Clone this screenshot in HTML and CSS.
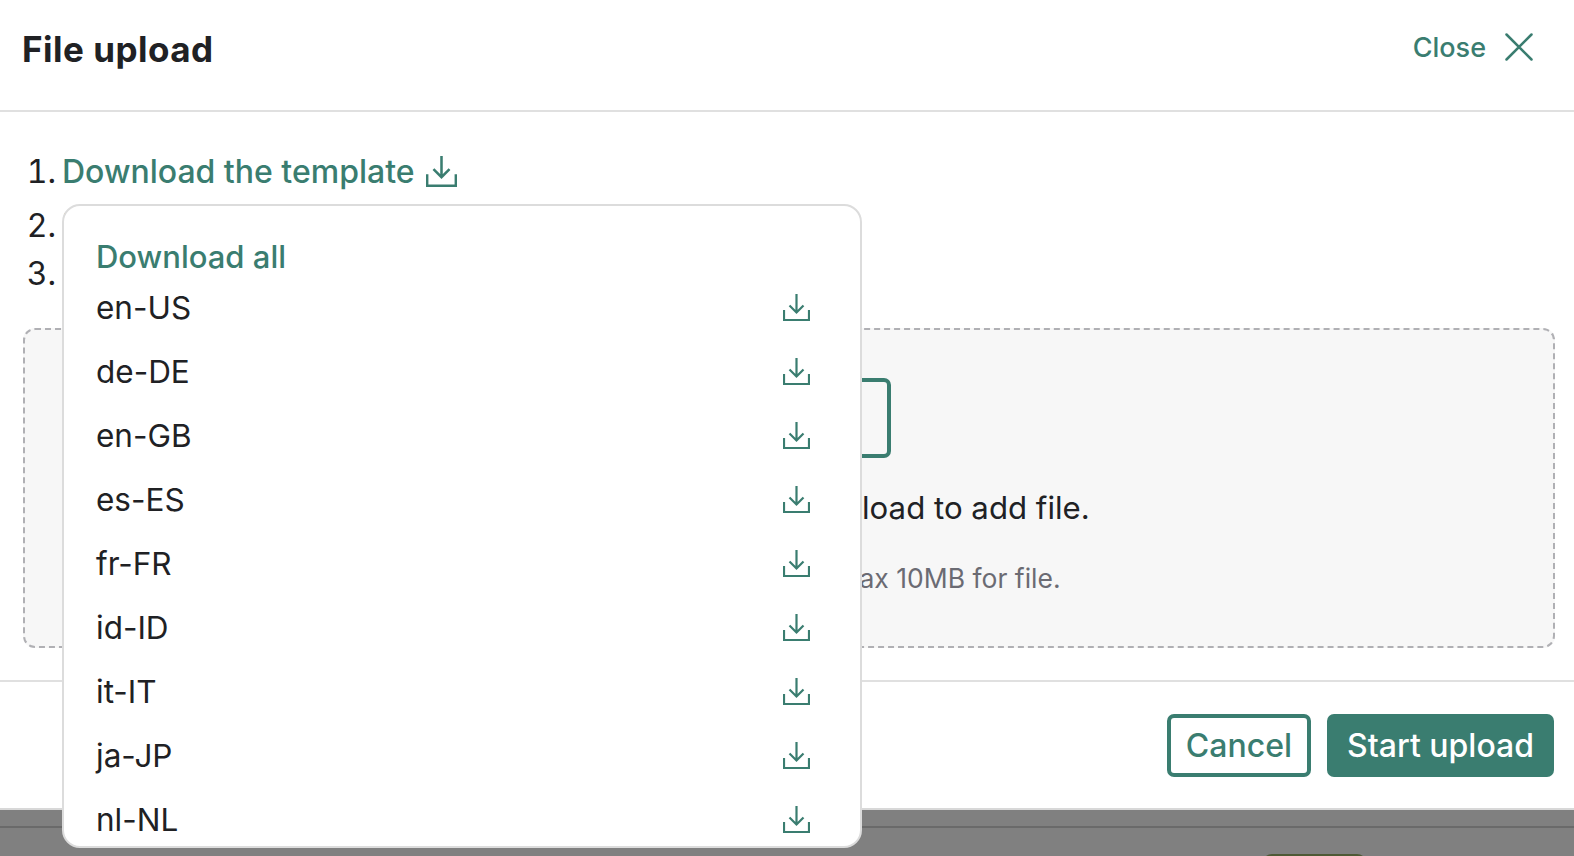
FILE: index.html
```html
<!DOCTYPE html>
<html lang="en">

<head>
    <meta charset="UTF-8">
    <meta name="viewport" content="width=device-width, initial-scale=1.0">
    <title>File upload</title>
    <link rel="stylesheet" href="styles.css">
</head>

<body>
    <svg class="icon-defs" aria-hidden="true">
        <symbol id="icon-download" viewBox="0 0 27 27">
            <path d="M1 16v10h25V16M13.5 0v18M6.5 11.500l7 7 7-7" fill="none" stroke="currentColor" stroke-width="2.200" />
        </symbol>
    </svg>

    <div class="modal">
        <!-- Cabecalho -->
        <header class="modal-header">
            <h1 class="modal-title">File upload</h1>
            <a class="close-link" href="#">
                <span>Close</span>
                <svg class="icon-close" viewBox="0 0 28 28">
                    <path d="M1.500 1.500l25 25M26.500 1.500l-25 25" fill="none" stroke="currentColor" stroke-width="2.500" stroke-linecap="round" />
                </svg>
            </a>
        </header>

        <div class="modal-body">
            <ol class="steps">
                <li>
                    <a class="template-link" href="#">Download the template
                        <svg class="icon-template"><use href="#icon-download"></use></svg>
                    </a>
                </li>
                <li>Fill in the template</li>
                <li>Upload the file</li>
            </ol>

            <div class="dropzone">
                <button class="btn btn-outline btn-upload">Upload</button>
                <p class="drop-text">Drag and drop or click upload to add file.</p>
                <p class="drop-hint">Only .xlsx or .csv format, max 10MB for file.</p>
            </div>
        </div>

        <footer class="modal-footer">
            <button class="btn btn-outline">Cancel</button>
            <button class="btn btn-primary">Start upload</button>
        </footer>

        <!-- Menu de download -->
        <div class="download-menu">
            <a class="download-all" href="#">Download all</a>
            <ul class="locale-list">
                <li>en-US <svg class="icon-row"><use href="#icon-download"></use></svg></li>
                <li>de-DE <svg class="icon-row"><use href="#icon-download"></use></svg></li>
                <li>en-GB <svg class="icon-row"><use href="#icon-download"></use></svg></li>
                <li>es-ES <svg class="icon-row"><use href="#icon-download"></use></svg></li>
                <li>fr-FR <svg class="icon-row"><use href="#icon-download"></use></svg></li>
                <li>id-ID <svg class="icon-row"><use href="#icon-download"></use></svg></li>
                <li>it-IT <svg class="icon-row"><use href="#icon-download"></use></svg></li>
                <li>ja-JP <svg class="icon-row"><use href="#icon-download"></use></svg></li>
                <li>nl-NL <svg class="icon-row"><use href="#icon-download"></use></svg></li>
            </ul>
        </div>
    </div>

    <div class="backdrop">
        <div class="backdrop-line"></div>
        <div class="backdrop-pill"></div>
    </div>
</body>

</html>
```

FILE: styles.css
```css
* {
    box-sizing: border-box;
}

html,
body {
    margin: 0;
    height: 856px;
    overflow: hidden;
}

body {
    font-family: Inter, 'Noto Sans', sans-serif;
    color: #202124;
    background-color: #808080;
}

.icon-defs {
    display: none;
}

.modal {
    position: relative;
    height: 810px;
    background: white;
    border-bottom: 2px solid #d8d8d8;
}

.modal-header {
    height: 112px;
    padding: 0 41px 12px 22px;
    display: flex;
    justify-content: space-between;
    align-items: center;
    border-bottom: 2px solid #e0e0e0;
}

.modal-title {
    margin: 0;
    font-size: 35px;
    font-weight: 700;
    letter-spacing: 0.5px;
}

.close-link {
    display: flex;
    align-items: center;
    gap: 19px;
    margin-bottom: 4px;
    color: #3a7d70;
    font-size: 27px;
    font-weight: 500;
    text-decoration: none;
}

.icon-close {
    width: 28px;
    height: 28px;
}

.modal-body {
    height: 570px;
    padding: 36px 19px 0 23px;
    border-bottom: 2px solid #e0e0e0;
}

.steps {
    margin: 0;
    padding: 0 0 0 39px;
    font-size: 32px;
    line-height: 48px;
}

.steps li::marker {
    content: counter(list-item) ".\2009";
}

.steps li:first-child {
    margin-bottom: 6px;
}

.template-link {
    display: inline-flex;
    align-items: center;
    gap: 11px;
    color: #3a7d70;
    font-weight: 500;
    text-decoration: none;
}

.icon-template {
    width: 31px;
    height: 31px;
    margin-top: -2px;
}

.dropzone {
    height: 320px;
    margin-top: 30px;
    padding-top: 48px;
    display: flex;
    flex-direction: column;
    align-items: center;
    background-color: #f7f7f7;
    border: 2px dashed #b0b0b4;
    border-radius: 12px;
}

.drop-text {
    margin: 31px 0 0;
    font-size: 31.200px;
}

.drop-hint {
    margin: 35px 0 0;
    font-size: 26.500px;
    color: #6b6b73;
}

.btn {
    height: 63px;
    padding: 0 20px;
    font-family: inherit;
    font-size: 32px;
    font-weight: 500;
    border-radius: 7px;
}

.btn-outline {
    padding: 0 15px;
    color: #3a7d70;
    background: white;
    border: 4px solid #3a7d70;
}

.btn-primary {
    color: white;
    background-color: #3a7d70;
    border: none;
}

.btn-upload {
    width: 204px;
    height: 80px;
    background: transparent;
}

.modal-footer {
    height: 126px;
    padding: 32px 20px 0 0;
    display: flex;
    justify-content: flex-end;
    align-items: flex-start;
    gap: 16px;
}

.download-menu {
    position: absolute;
    left: 62px;
    top: 204px;
    width: 800px;
    height: 644px;
    padding: 32px 50px 0 32px;
    background: white;
    border: 2px solid #dcdcdc;
    border-radius: 18px;
    overflow: hidden;
}

.download-all {
    display: block;
    color: #3a7d70;
    font-size: 31px;
    font-weight: 500;
    line-height: 37px;
    text-decoration: none;
}

.locale-list {
    margin: 0;
    padding: 0;
    list-style: none;
}

.locale-list li {
    height: 64px;
    display: flex;
    justify-content: space-between;
    align-items: center;
    font-size: 31.500px;
}

.icon-row {
    width: 27px;
    height: 27px;
    color: #3a7d70;
}

.backdrop {
    height: 46px;
    padding-top: 16px;
}

.backdrop-line {
    height: 2px;
    background-color: #6a6a6a;
}

.backdrop-pill {
    width: 105px;
    height: 20px;
    margin: 26px 0 0 1262px;
    background-color: #4e5a36;
    border-radius: 10px;
}
```
